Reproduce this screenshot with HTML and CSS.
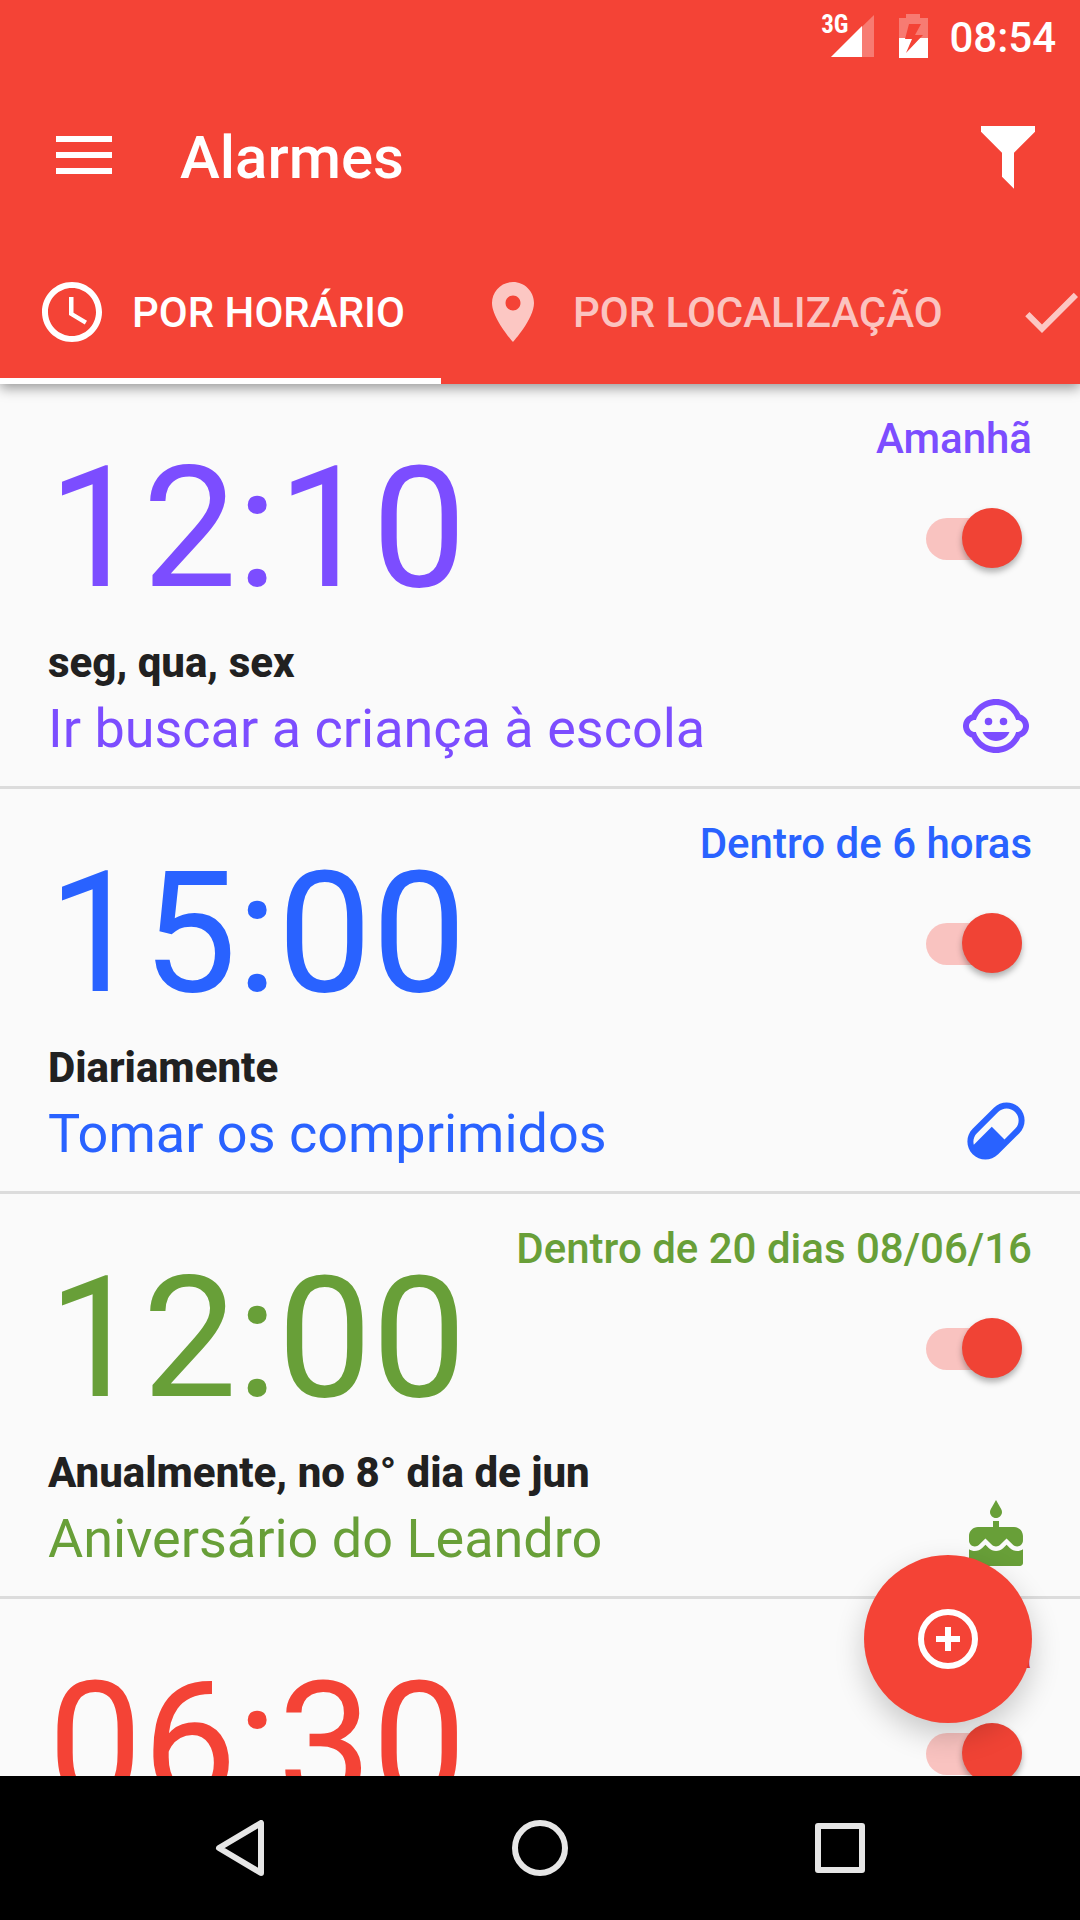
FILE: index.html
```html
<!DOCTYPE html>
<html lang="pt">
<head>
    <meta charset="UTF-8">
    <meta name="viewport" content="width=device-width, initial-scale=1">
    <title>Alarmes</title>
    <link rel="stylesheet" href="styles.css">
</head>
<body>
    <header class="header">
        <div class="statusBar">
            <div class="signal">
                <span class="network">3G</span>
                <svg width="43" height="42" viewBox="0 0 43 42">
                    <path d="M0 42H43V0z" fill="#fff" opacity=".3"/>
                    <path d="M0 42H31V11z" fill="#fff"/>
                </svg>
            </div>
            <svg class="battery" width="29" height="44" viewBox="0 0 29 44">
                <path d="M7 0h14v4h8v20H0V4h7z" fill="#fff" opacity=".3"/>
                <path d="M0 24h29v20H0z" fill="#fff"/>
                <path d="M10 10h12l-6 11h8L7 39l6-14H6z" fill="#f44336"/>
            </svg>
            <span class="clock">08:54</span>
        </div>
        <div class="toolbar">
            <button class="iconBtn menuBtn" aria-label="Menu">
                <svg width="56" height="38" viewBox="0 0 56 38"><path d="M0 0h56v6H0zM0 16h56v6H0zM0 32h56v6H0z"/></svg>
            </button>
            <h1>Alarmes</h1>
            <button class="iconBtn" aria-label="Filtrar">
                <svg class="icon" viewBox="0 0 24 24"><path d="M3 2h18v2h-.08L14 10.92v11.99l-4-4v-8L3.09 4H3z"/></svg>
            </button>
        </div>
        <nav class="tabs">
            <button class="tab active">
                <svg class="icon" viewBox="0 0 24 24"><path d="M11.99 2C6.47 2 2 6.48 2 12s4.47 10 9.99 10C17.52 22 22 17.52 22 12S17.52 2 11.99 2zM12 20c-4.42 0-8-3.58-8-8s3.58-8 8-8 8 3.58 8 8-3.58 8-8 8zm.5-13H11v6l5.25 3.15.75-1.23-4.5-2.67z"/></svg>
                POR HORÁRIO
            </button>
            <button class="tab">
                <svg class="icon" viewBox="0 0 24 24"><path d="M12 2C8.13 2 5 5.13 5 9c0 5.25 7 13 7 13s7-7.75 7-13c0-3.87-3.13-7-7-7zm0 9.5c-1.38 0-2.5-1.12-2.5-2.5s1.12-2.5 2.5-2.5 2.5 1.12 2.5 2.5-1.12 2.5-2.5 2.5z"/></svg>
                POR LOCALIZAÇÃO
            </button>
            <button class="tab" aria-label="Concluídos">
                <svg class="icon" viewBox="0 0 24 24"><path d="M9 16.17L4.83 12l-1.42 1.41L9 19 21 7l-1.41-1.41z"/></svg>
            </button>
        </nav>
    </header>

    <main class="main">
        <ul class="alarmList">
            <li class="alarm purple">
                <div class="alarmTop">
                    <label class="time" for="alarm1">12:10</label>
                    <div class="state">
                        <span class="next">Amanhã</span>
                        <input type="checkbox" class="switch" id="alarm1" checked>
                    </div>
                </div>
                <div class="alarmBottom">
                    <div class="info">
                        <p class="days">seg, qua, sex</p>
                        <p class="name">Ir buscar a criança à escola</p>
                    </div>
                    <svg class="icon" viewBox="0 0 24 24">
                        <circle cx="14.5" cy="10.5" r="1.25"/>
                        <circle cx="9.5" cy="10.5" r="1.25"/>
                        <path d="M22.94 12.66c.04-.21.06-.43.06-.66s-.02-.45-.06-.66c-.25-1.51-1.36-2.74-2.81-3.17-.53-1.12-1.28-2.1-2.19-2.91C16.36 3.85 14.28 3 12 3s-4.36.85-5.94 2.26c-.92.81-1.67 1.8-2.19 2.91-1.45.43-2.56 1.65-2.81 3.17-.04.21-.06.43-.06.66s.02.45.06.66c.25 1.51 1.36 2.74 2.81 3.17.52 1.11 1.27 2.09 2.17 2.89C7.62 20.14 9.71 21 12 21s4.38-.86 5.97-2.28c.9-.8 1.65-1.79 2.17-2.89 1.44-.43 2.55-1.65 2.8-3.17zM19 14c-.1 0-.19-.02-.29-.03-.2.67-.49 1.29-.86 1.86C16.6 17.74 14.45 19 12 19s-4.6-1.26-5.85-3.17c-.37-.57-.66-1.19-.86-1.86-.1.01-.19.03-.29.03-1.1 0-2-.9-2-2s.9-2 2-2c.1 0 .19.02.29.03.2-.67.49-1.29.86-1.86C7.4 6.26 9.55 5 12 5s4.6 1.26 5.85 3.17c.37.57.66 1.19.86 1.86.1-.01.19-.03.29-.03 1.1 0 2 .9 2 2s-.9 2-2 2zM7.5 14c.76 1.77 2.49 3 4.5 3s3.74-1.23 4.5-3h-9z"/>
                    </svg>
                </div>
            </li>
            <li class="alarm blue">
                <div class="alarmTop">
                    <label class="time" for="alarm2">15:00</label>
                    <div class="state">
                        <span class="next">Dentro de 6 horas</span>
                        <input type="checkbox" class="switch" id="alarm2" checked>
                    </div>
                </div>
                <div class="alarmBottom">
                    <div class="info">
                        <p class="days">Diariamente</p>
                        <p class="name">Tomar os comprimidos</p>
                    </div>
                    <svg class="icon" viewBox="0 0 24 24"><path d="M4.22 11.29l7.07-7.07C13.64 1.88 17.43 1.88 19.78 4.22 22.12 6.56 22.12 10.36 19.78 12.71l-7.07 7.07C10.36 22.12 6.56 22.12 4.22 19.78 1.88 17.43 1.88 13.64 4.22 11.29M5.64 12.71C4.59 13.75 4.24 15.24 4.6 16.57l5.99-5.98 4.24 4.24 3.53-3.54C19.93 9.73 19.93 7.2 18.36 5.64 16.8 4.07 14.27 4.07 12.71 5.64z"/></svg>
                </div>
            </li>
            <li class="alarm green">
                <div class="alarmTop">
                    <label class="time" for="alarm3">12:00</label>
                    <div class="state">
                        <span class="next">Dentro de 20 dias 08/06/16</span>
                        <input type="checkbox" class="switch" id="alarm3" checked>
                    </div>
                </div>
                <div class="alarmBottom">
                    <div class="info">
                        <p class="days">Anualmente, no 8° dia de jun</p>
                        <p class="name">Aniversário do Leandro</p>
                    </div>
                    <svg class="icon" viewBox="0 0 24 24"><path d="M12 6c1.11 0 2-.9 2-2 0-.38-.1-.73-.29-1.03L12 0l-1.71 2.97c-.19.3-.29.65-.29 1.03 0 1.1.9 2 2 2zm4.6 9.99l-1.07-1.07-1.08 1.07c-1.3 1.3-3.58 1.31-4.89 0l-1.07-1.07-1.09 1.07C6.75 16.64 5.88 17 4.96 17c-.73 0-1.4-.23-1.96-.61V21c0 .55.45 1 1 1h16c.55 0 1-.45 1-1v-4.61c-.56.38-1.23.61-1.96.61-.92 0-1.79-.36-2.44-1.01zM18 9h-5V7h-2v2H6c-1.66 0-3 1.34-3 3v1.54c0 1.08.88 1.96 1.96 1.96.52 0 1.02-.2 1.38-.57l2.14-2.13 2.13 2.13c.74.74 2.03.74 2.77 0l2.14-2.13 2.13 2.13c.37.37.86.57 1.38.57 1.08 0 1.96-.88 1.96-1.96V12C21 10.34 19.66 9 18 9z"/></svg>
                </div>
            </li>
            <li class="alarm red">
                <div class="alarmTop">
                    <label class="time" for="alarm4">06:30</label>
                    <div class="state">
                        <span class="next">Amanhã</span>
                        <input type="checkbox" class="switch" id="alarm4" checked>
                    </div>
                </div>
            </li>
        </ul>
        <button class="addBtn" aria-label="Adicionar alarme">
            <svg class="icon" viewBox="0 0 24 24" stroke="#fff" stroke-width="2"><circle cx="12" cy="12" r="9" fill="none"/><path d="M12 8v8M8 12h8"/></svg>
        </button>
    </main>

    <footer class="navBar">
        <button class="navBtn" aria-label="Voltar">
            <svg width="56" height="56" viewBox="0 0 56 56"><path d="M49 3V53L7 28z"/></svg>
        </button>
        <button class="navBtn" aria-label="Início">
            <svg width="56" height="56" viewBox="0 0 56 56"><circle cx="28" cy="28" r="25"/></svg>
        </button>
        <button class="navBtn" aria-label="Recentes">
            <svg width="56" height="56" viewBox="0 0 56 56"><rect x="6" y="6" width="44" height="44"/></svg>
        </button>
    </footer>
</body>
</html>
```
FILE: styles.css
```css
*{
    margin: 0;
    padding: 0;
    box-sizing: border-box;
}
body{
    display: flex;
    flex-direction: column;
    height: 100vh;
    overflow: hidden;
    background: #fafafa;
    font-family: Roboto, "Liberation Sans", sans-serif;
}
button{
    border: none;
    background: none;
    color: inherit;
    font: inherit;
    cursor: pointer;
}
svg{
    display: block;
    flex: none;
}
.icon{
    width: 72px;
    height: 72px;
    fill: currentColor;
}

/* header */
.header{
    position: relative;
    z-index: 1;
    background: #f44336;
    color: #fff;
    box-shadow: 0 4px 12px rgba(0,0,0,.4);
}
.statusBar{
    display: flex;
    justify-content: flex-end;
    align-items: center;
    height: 72px;
    padding-right: 24px;
}
.signal{
    position: relative;
    padding-left: 10px;
    margin-right: 25px;
}
.network{
    position: absolute;
    right: 26px;
    top: 0;
    font-family: "Roboto Condensed", Roboto, sans-serif;
    font-size: 25px;
    font-weight: 700;
    line-height: 20px;
}
.battery{
    margin-right: 21px;
}
.clock{
    padding-top: 2px;
    font-size: 42px;
    font-weight: 500;
}
.toolbar{
    display: flex;
    align-items: center;
    height: 168px;
    padding: 0 36px 0 56px;
}
.toolbar h1{
    flex: 1;
    margin-left: 68px;
    padding-top: 2px;
    font-size: 60px;
    font-weight: 500;
}
.iconBtn svg{
    fill: #fff;
}
.menuBtn{
    padding-bottom: 2px;
}
.tabs{
    display: flex;
    height: 144px;
    overflow: hidden;
}
.tab{
    display: flex;
    flex: none;
    align-items: center;
    gap: 24px;
    padding: 0 36px;
    border-bottom: 6px solid transparent;
    border-top: 6px solid transparent;
    font-size: 42px;
    font-weight: 500;
    color: rgba(255,255,255,.7);
}
.tab.active{
    color: #fff;
    border-bottom-color: #fff;
}

/* alarm list */
.main{
    position: relative;
    flex: 1;
    min-height: 0;
}
.alarmList{
    height: 100%;
    overflow: hidden;
    list-style: none;
}
.alarm{
    padding: 31px 48px 24px;
    border-bottom: 3px solid #dcdcdc;
}
.purple{ color: #7c4dff; }
.blue{ color: #2962ff; }
.green{ color: #689f38; }
.red{ color: #f44336; }
.alarmTop,.alarmBottom{
    display: flex;
    justify-content: space-between;
}
.alarmBottom{
    min-height: 123px;
}
.alarmBottom .icon{
    align-self: flex-end;
}
.time{
    padding: 16px 0 12px;
    font-size: 168px;
    line-height: 196px;
}
.state{
    display: flex;
    flex-direction: column;
    align-items: flex-end;
}
.next{
    font-size: 42px;
    font-weight: 500;
    line-height: 48px;
}
.switch{
    appearance: none;
    position: relative;
    width: 96px;
    height: 42px;
    margin: 55px 10px 0 0;
    border-radius: 21px;
    background: #f9c3c0;
    cursor: pointer;
}
.switch::before{
    content: "";
    position: absolute;
    left: 0;
    top: -10px;
    width: 60px;
    height: 60px;
    border-radius: 50%;
    background: #fafafa;
    box-shadow: 0 4px 6px rgba(0,0,0,.3);
}
.switch:checked::before{
    left: 36px;
    background: #f04335;
}
.days{
    font-size: 42px;
    font-weight: 800;
    line-height: 48px;
    color: #212121;
}
.name{
    margin-top: 10px;
    font-size: 54px;
    line-height: 64px;
}

/* floating button */
.addBtn{
    position: absolute;
    right: 48px;
    bottom: 53px;
    display: flex;
    justify-content: center;
    align-items: center;
    width: 168px;
    height: 168px;
    border-radius: 50%;
    background: #f44336;
    color: #fff;
    box-shadow: 0 12px 30px rgba(0,0,0,.2);
}

/* system buttons */
.navBar{
    display: flex;
    height: 144px;
    padding: 0 90px;
    background: #000;
}
.navBtn{
    display: flex;
    flex: 1;
    justify-content: center;
    align-items: center;
}
.navBtn svg{
    fill: none;
    stroke: #e6e6e6;
    stroke-width: 6;
    stroke-linejoin: round;
}
```
